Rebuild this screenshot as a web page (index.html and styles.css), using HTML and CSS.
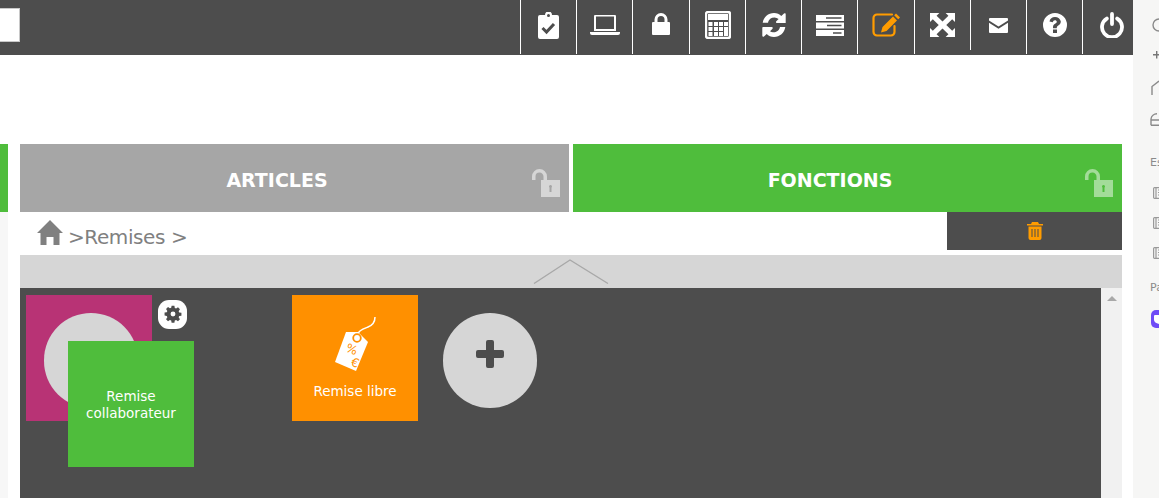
FILE: index.html
```html
<!DOCTYPE html>
<html lang="fr">
<head>
<meta charset="utf-8">
<title>Remises</title>
<link rel="stylesheet" href="styles.css">
</head>
<body>
<div class="page">
  <main class="main">
    <header class="topbar">
      <div class="logo-box"></div>
      <nav class="tools">
        <div class="tool"><svg width="21" height="27" viewBox="0 0 21 27"><path fill="#fff" d="M2 3h5a3.500 3.500 0 0 1 7 0h5a2 2 0 0 1 2 2v20a2 2 0 0 1-2 2H2a2 2 0 0 1-2-2V5a2 2 0 0 1 2-2z"/><circle cx="10.500" cy="3.500" r="1.500" fill="#4d4d4d"/><path fill="none" stroke="#4d4d4d" stroke-width="3" d="M4.500 16l4 4 7.500-8"/></svg></div>
        <div class="tool"><svg width="30" height="20" viewBox="0 0 30 20"><path fill="none" stroke="#fff" stroke-width="2" d="M5 1.500a1 1 0 0 1 1-1h18a1 1 0 0 1 1 1V15H5z"/><path fill="#fff" d="M0 17h30v1a2 2 0 0 1-2 2H2a2 2 0 0 1-2-2z"/></svg></div>
        <div class="tool tool-high"><svg width="18" height="22" viewBox="0 0 18 22"><path fill="#fff" d="M1 9h1.500V6.500a6.500 6.500 0 0 1 13 0V9H17a1 1 0 0 1 1 1v11a1 1 0 0 1-1 1H1a1 1 0 0 1-1-1V10a1 1 0 0 1 1-1zm4.500 0h7V6.500a3.500 3.500 0 0 0-7 0z"/></svg></div>
        <div class="tool"><svg width="26" height="28" viewBox="0 0 26 28"><rect x="1" y="1" width="24" height="26" rx="2" fill="none" stroke="#fff" stroke-width="2.400"/><rect x="3" y="3" width="20" height="6" fill="#fff"/><g fill="#fff"><rect x="3.500" y="11" width="4" height="4"/><rect x="9" y="11" width="4" height="4"/><rect x="14" y="11" width="4" height="4"/><rect x="19" y="11" width="4" height="4"/><rect x="3.500" y="16" width="4" height="4"/><rect x="9" y="16" width="4" height="4"/><rect x="14" y="16" width="4" height="4"/><rect x="19" y="16" width="4" height="9"/><rect x="3.500" y="21" width="4" height="4"/><rect x="9" y="21" width="4" height="4"/><rect x="14" y="21" width="4" height="4"/></g></svg></div>
        <div class="tool"><svg width="24" height="24" viewBox="0 0 24 24"><path fill="#fff" d="M12 0c3 0 5.500 1.200 7.300 3L22 .5a1 1 0 0 1 1.700.7V10H15a1 1 0 0 1-.7-1.700l2.300-2.300A6.500 6.500 0 0 0 6 9.800H.7C1.500 4.200 6.200 0 12 0zM1 14h8.800a1 1 0 0 1 .7 1.700L8 18.200a6.500 6.500 0 0 0 10-4.200h5.300C22.500 19.800 17.800 24 12 24c-3 0-5.500-1.200-7.300-3L2 23.500a1 1 0 0 1-1.700-.7V15a1 1 0 0 1 .7-1z"/></svg></div>
        <div class="tool"><svg width="28" height="21" viewBox="0 0 28 21"><path fill="#fff" d="M0 0h28v6H0zM0 7.500h28v6H0zM0 15h28v6H0z"/><path fill="#4d4d4d" d="M10 2.300h15.500v1.400H10zM11 9.800h14.500v1.400H11zM17 17.300h8.500v1.400H17z"/></svg></div>
        <div class="tool"><svg width="29" height="24" viewBox="0 0 29 24"><path fill="none" stroke="#ff9c00" stroke-width="2.200" stroke-linecap="round" d="M20 1.500H5A3.500 3.500 0 0 0 1.500 5v14A3.500 3.500 0 0 0 5 22.500h14a3.500 3.500 0 0 0 3.500-3.500v-6"/><path fill="#ff9c00" d="M24 .5l4 4-1.800 1.800-4-4zM21 3.500l4 4L14.500 18 9 19.500l1.500-5.500z"/></svg></div>
        <div class="tool"><svg width="25" height="24" viewBox="0 0 24 24" preserveAspectRatio="none"><path fill="#fff" d="M0 0h9L6.300 2.700 12 8.400l5.700-5.700L15 0h9v9l-2.700-2.700L15.600 12l5.700 5.700L24 15v9h-9l2.700-2.700L12 15.600l-5.700 5.700L9 24H0v-9l2.700 2.700L8.400 12 2.700 6.300 0 9z"/></svg></div>
        <div class="tool tool-short"><svg width="19" height="15" viewBox="0 0 19 15"><path fill="#fff" d="M1 0h17a1 1 0 0 1 1 1v1.500l-9.500 6L0 2.500V1a1 1 0 0 1 1-1zM0 4.700l9.500 6 9.500-6V14a1 1 0 0 1-1 1H1a1 1 0 0 1-1-1z"/></svg></div>
        <div class="tool"><svg width="24" height="24" viewBox="0 0 24 24"><path fill="#fff" fill-rule="evenodd" d="M12 0a12 12 0 1 1 0 24 12 12 0 0 1 0-24zM10 16.500v3.500h4v-3.500zM12 4C9 4 7 5.500 6.500 8.500l3.300.8c.3-1.400 1-2.100 2.100-2.100 1.100 0 1.900.6 1.900 1.500 0 .8-.6 1.300-1.500 1.900-1.500 1-2.300 1.900-2.300 3.900v.8h3.800v-.5c0-1 .5-1.500 1.500-2.200 1.400-1 2.500-2 2.500-4C17.300 5.700 15 4 12 4z"/></svg></div>
        <div class="tool tool-last"><svg width="24" height="26" viewBox="0 0 24 26"><path fill="none" stroke="#fff" stroke-width="3.800" stroke-linecap="round" d="M12 2v10M6.800 6.600a10 10 0 1 0 10.400 0"/></svg></div>
      </nav>
    </header>

    <div class="spacer"></div>

    <div class="tabs">
      <div class="tab-prev"></div>
      <div class="tab tab-grey">ARTICLES
        <svg class="unlock" width="30" height="29" viewBox="0 0 30 29"><path fill="none" stroke="currentColor" stroke-width="3.500" d="M2.750 11V7.500a5.750 5.750 0 0 1 11.500 0V11"/><path fill="currentColor" fill-rule="evenodd" d="M10 11h19v17H10zM19.500 16a1.500 1.500 0 0 0-1 2.600V23h2v-4.400a1.500 1.500 0 0 0-1-2.600z"/></svg>
      </div>
      <div class="tab tab-green">FONCTIONS
        <svg class="unlock" width="30" height="29" viewBox="0 0 30 29"><path fill="none" stroke="currentColor" stroke-width="3.500" d="M2.750 11V7.500a5.750 5.750 0 0 1 11.500 0V11"/><path fill="currentColor" fill-rule="evenodd" d="M10 11h19v17H10zM19.500 16a1.500 1.500 0 0 0-1 2.600V23h2v-4.400a1.500 1.500 0 0 0-1-2.600z"/></svg>
      </div>
    </div>

    <div class="lower">
      <div class="lower-strip"></div>
      <div class="lower-body">
        <div class="crumbs">
          <div class="crumb-path">
            <svg width="26" height="25" viewBox="0 0 26 25"><path fill="#808080" d="M13 0l13 13h-3.500v12h-6v-8h-7v8h-6V13H0z"/></svg>
            <span>&gt;Remises &gt;</span>
          </div>
          <div class="trash"><svg width="16" height="18" viewBox="0 0 16 18"><path fill="#ff9c00" fill-rule="evenodd" d="M5 0h6l1 2h4v1.500H0V2h4zM1.500 4.500h13V16a2 2 0 0 1-2 2h-9a2 2 0 0 1-2-2zM4.500 7v8h1V7zM7.500 7v8h1V7zM10.500 7v8h1V7z"/></svg></div>
        </div>

        <div class="collapse">
          <svg width="76" height="25" viewBox="0 0 76 25"><path fill="none" stroke="#a8a8a8" stroke-width="1.300" d="M1 24.500L37 1 75 24.500"/></svg>
        </div>

        <div class="workspace">
          <section class="panel">
            <div class="slot">
              <div class="tile tile-magenta"><div class="blob"></div></div>
              <div class="gear"><svg width="18" height="18" viewBox="-1 -1 22 22"><path fill="#4d4d4d" fill-rule="evenodd" d="M8.300 0h3.400l.5 2.700 1.600.7 2.300-1.600 2.400 2.400-1.600 2.300.7 1.600 2.700.5v3.400l-2.700.5-.7 1.600 1.600 2.300-2.400 2.400-2.300-1.600-1.600.7-.5 2.700H8.300l-.5-2.700-1.600-.7-2.300 1.600-2.400-2.400 1.600-2.300-.7-1.600L-.3 11.700V8.300l2.700-.5.700-1.600-1.600-2.300 2.400-2.400 2.300 1.600 1.600-.7zM10 7a3 3 0 1 0 0 6 3 3 0 0 0 0-6z"/></svg></div>
              <div class="tile tile-green">Remise<br>collaborateur</div>
            </div>
            <div class="tile tile-orange">
              <svg width="42" height="55" viewBox="0 0 42 55"><path fill="none" stroke="#fff" stroke-width="1.500" d="M23 20c0-6 6-8 11-10 5-2 7-5 7-10"/><path fill="#fff" d="M12 15h12l10 10-12 29-21-9z"/><circle cx="23" cy="21" r="3.800" fill="none" stroke="#ff9000" stroke-width="1.800"/><text x="11" y="34" class="tag-mark" transform="rotate(22 11 34)">%</text><text x="16" y="48" class="tag-mark" transform="rotate(22 16 48)">€</text></svg>
              <span>Remise libre</span>
            </div>
            <div class="add"><svg width="28" height="28" viewBox="0 0 28 28"><path fill="#4d4d4d" d="M10 2a2 2 0 0 1 2-2h4a2 2 0 0 1 2 2v8h8a2 2 0 0 1 2 2v4a2 2 0 0 1-2 2h-8v8a2 2 0 0 1-2 2h-4a2 2 0 0 1-2-2v-8H2a2 2 0 0 1-2-2v-4a2 2 0 0 1 2-2h8z"/></svg></div>
          </section>
          <div class="scroll"><span class="scroll-up"></span></div>
        </div>
      </div>
    </div>
  </main>

  <aside class="side">
    <svg class="side-circle" width="14" height="14" viewBox="0 0 14 14"><circle cx="7" cy="7" r="6" fill="none" stroke="#8a8a8a" stroke-width="1.400"/></svg>
    <svg class="side-spark" width="10" height="10" viewBox="0 0 10 10"><path fill="#777" d="M3 0h1.400v3H7.500v1.400H4.400v3H3v-3H0V3h3z"/><path fill="#777" d="M7 7h3v1.400H7z"/></svg>
    <svg class="side-home" width="8" height="15" viewBox="0 0 8 15"><path fill="none" stroke="#8a8a8a" stroke-width="1.400" d="M1 15V6.500L8 1"/></svg>
    <svg class="side-drive" width="9" height="13" viewBox="0 0 9 13"><path fill="none" stroke="#8a8a8a" stroke-width="1.400" d="M1 12.300V6A6 6 0 0 1 7 .8M1 7h8M1 12.300h8"/></svg>
    <div class="side-label">Es</div>
    <svg class="side-doc side-doc-first" width="6" height="12" viewBox="0 0 6 12"><path fill="none" stroke="#999" stroke-width="1.200" d="M6 .6H1.500a1 1 0 0 0-.9.9v9a1 1 0 0 0 .9.9H6M3 .6v10.800M5 3h1M5 5.500h1M5 8h1"/></svg>
    <svg class="side-doc" width="6" height="12" viewBox="0 0 6 12"><path fill="none" stroke="#999" stroke-width="1.200" d="M6 .6H1.500a1 1 0 0 0-.9.9v9a1 1 0 0 0 .9.9H6M3 .6v10.800M5 3h1M5 5.500h1M5 8h1"/></svg>
    <svg class="side-doc" width="6" height="12" viewBox="0 0 6 12"><path fill="none" stroke="#999" stroke-width="1.200" d="M6 .6H1.500a1 1 0 0 0-.9.9v9a1 1 0 0 0 .9.9H6M3 .6v10.800M5 3h1M5 5.500h1M5 8h1"/></svg>
    <div class="side-label side-label-2">Pa</div>
    <svg class="side-app" width="8" height="18" viewBox="0 0 8 18"><path fill="#6f4cf6" d="M8 0H5a5 5 0 0 0-5 5v8a5 5 0 0 0 5 5h3z"/><path fill="#fff" d="M8 5H4a1 1 0 0 0-1 1v4c0 2 2 3 5 4z"/></svg>
  </aside>
</div>
</body>
</html>
```
FILE: styles.css
```css
* { box-sizing: border-box; }
html, body { margin: 0; padding: 0; height: 100%; }
body { background: #fff; font-family: "DejaVu Sans", Verdana, sans-serif; overflow: hidden; }

.page { display: flex; width: 1159px; height: 498px; overflow: hidden; }
.main { width: 1133px; flex: none; display: flex; flex-direction: column; }

.topbar { height: 55px; background: #4d4d4d; display: flex; justify-content: space-between; align-items: flex-start; flex: none; }
.logo-box { width: 20px; height: 34px; margin-top: 8px; background: #fff; border: 1px solid #c8c8c8; border-left: 0; }
.tools { display: grid; grid-template-columns: 56px 56px 57px 56px 56px 56px 57px 56px 56px 56px 51px; }
.tool { height: 54px; border-left: 1px solid #fff; display: flex; align-items: center; justify-content: center; padding-bottom: 4px; }
.tool-high { padding-bottom: 6px; }
.tool-short { height: 50px; padding-bottom: 0; }
.tool-last { padding-left: 7px; }

.spacer { height: 89px; flex: none; }

.tabs { display: flex; height: 68px; flex: none; padding-right: 11px; }
.tab-prev { width: 8px; background: #4fbd3c; margin-right: 12px; }
.tab { position: relative; width: 549px; display: flex; align-items: center; justify-content: center; color: #fff; font-size: 19px; font-weight: 700; padding: 3px 35px 0 0; }
.tab-grey { background: #a6a6a6; margin-right: 4px; }
.tab-green { background: #4fbd3c; }
.unlock { position: absolute; right: 8px; top: 25px; }
.tab-grey .unlock { color: #d6d6d6; }
.tab-green .unlock { color: #a3dc99; }

.lower { flex: 1; display: flex; min-height: 0; }
.lower-strip { width: 8px; background: #f7f7f7; flex: none; }
.lower-body { flex: 1; min-width: 0; margin: 0 11px 0 12px; display: flex; flex-direction: column; }

.crumbs { display: flex; justify-content: space-between; height: 43px; flex: none; }
.crumb-path { display: flex; align-items: flex-start; gap: 5px; padding: 8px 0 0 17px; color: #808080; font-size: 20px; letter-spacing: -.4px; }
.crumb-path span { line-height: 34px; }
.trash { width: 175px; height: 38px; background: #4d4d4d; display: flex; align-items: center; justify-content: center; }

.collapse { height: 33px; flex: none; background: #d6d6d6; display: flex; justify-content: center; padding-top: 4px; }

.workspace { flex: 1; display: flex; min-height: 0; }
.panel { flex: 1; background: #4d4d4d; display: flex; align-items: flex-start; padding: 7px 0 0 6px; }
.scroll { width: 21px; background: #f1f1f1; display: flex; justify-content: center; padding-top: 8px; }
.scroll-up { width: 0; height: 0; border-left: 5px solid transparent; border-right: 5px solid transparent; border-bottom: 5px solid #a8a8a8; }

.slot { position: relative; width: 266px; flex: none; }
.tile { width: 126px; height: 126px; color: #fff; font-size: 13.500px; }
.tile-magenta { background: #b83375; display: flex; padding: 18px 0 0 18px; }
.blob { width: 94px; height: 95px; border-radius: 47px; background: #d6d6d6; }
.gear { position: absolute; left: 132px; top: 5px; width: 29px; height: 29px; background: #fff; border-radius: 11px; display: flex; align-items: center; justify-content: center; padding-bottom: 1px; }
.tile-green { position: absolute; left: 42px; top: 46px; background: #4fbd3c; display: flex; align-items: center; justify-content: center; text-align: center; line-height: 17px; padding-top: 2px; }
.tile-orange { flex: none; background: #ff9000; display: flex; flex-direction: column; align-items: center; padding-top: 22px; }
.tile-orange span { margin-top: 10px; line-height: 18px; }
.tag-mark { font-size: 12px; fill: #ff9000; }

.add { width: 94px; height: 95px; margin: 18px 0 0 25px; border-radius: 47px; background: #d6d6d6; display: flex; align-items: center; justify-content: center; padding-bottom: 13px; flex: none; }

.side { width: 26px; flex: none; background: #f6f6f5; display: flex; flex-direction: column; overflow: hidden; padding: 18px 0 0 17px; align-items: flex-start; }
.side svg { flex: none; }
.side-circle { margin-left: 2px; }
.side-spark { margin: 19px 0 0 3px; }
.side-home { margin: 19px 0 0 1px; }
.side-drive { margin: 18px 0 0 0; }
.side-label { color: #8a8a8a; font-size: 11px; line-height: 14px; margin-top: 30px; }
.side-label-2 { margin-top: 22px; }
.side-doc { margin: 18px 0 0 3px; }
.side-doc-first { margin-top: 17px; }
.side-app { margin: 15px 0 0 1px; }
```
